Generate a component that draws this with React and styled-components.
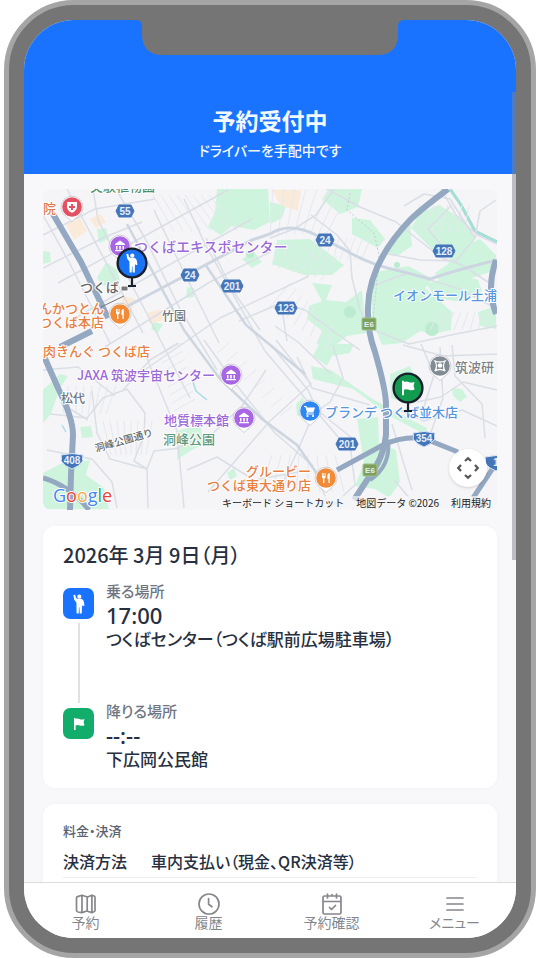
import React from "react";
import styled, { createGlobalStyle } from "styled-components";

const GlobalStyle = createGlobalStyle`
  * {
    box-sizing: border-box;
  }

  body {
    margin: 0;
    background: #fff;
    color: #27303f;
    font-family: "Noto Sans CJK JP", "Noto Sans", sans-serif;
    font-feature-settings: "palt";
  }

  h1, h2, h3, p, dl, dt, dd, ol {
    margin: 0;
    padding: 0;
  }

  button {
    font: inherit;
    color: inherit;
    border: 0;
    padding: 0;
    background: none;
    cursor: pointer;
  }
`;

const Page = styled.div`
  padding: 0 4px;
`;

const Phone = styled.div`
  height: 100vh;
  padding: 15px;
  border: 5px solid #a5a5a5;
  border-radius: 70px;
  background: #757575;
`;

const Screen = styled.div`
  position: relative;
  display: flex;
  flex-direction: column;
  height: 100%;
  overflow: hidden;
  border-radius: 50px;
  background: #f8f8fb;
`;

const Notch = styled.svg`
  position: absolute;
  top: 0;
  left: 50%;
  transform: translateX(-50%);
  fill: #757575;
`;

const Header = styled.header`
  display: flex;
  flex-direction: column;
  gap: 4px;
  padding: 84px 16px 14px;
  background: #1a73ff;
  color: #f1f8ff;
  text-align: center;
`;

const Title = styled.h1`
  font-size: 23px;
  line-height: 32px;
  font-weight: 700;
`;

const Subtitle = styled.p`
  font-size: 14px;
  line-height: 20px;
  font-weight: 500;
`;

const Content = styled.main`
  display: flex;
  flex: 1;
  flex-direction: column;
  gap: 16px;
  min-height: 0;
  padding: 15px 19px;
  overflow-y: auto;
  scrollbar-width: none;

  > * {
    flex-shrink: 0;
  }
`;

const ScrollThumb = styled.div`
  position: absolute;
  top: 72px;
  right: 0;
  width: 4px;
  height: 51%;
  background: rgba(128, 132, 140, 0.5);
`;

const MapCard = styled.section`
  position: relative;
  overflow: hidden;
  border-radius: 8px;
  background: #f5f5f8;
  font-feature-settings: normal;

  > svg {
    display: block;
    width: 100%;
  }
`;

const RecenterButton = styled.button`
  position: absolute;
  right: 10px;
  bottom: 23px;
  display: grid;
  place-items: center;
  width: 38px;
  height: 38px;
  border-radius: 50%;
  background: #fff;
  color: #555;
  box-shadow: 0 1px 3px rgba(0, 0, 0, 0.15);
`;

const Attribution = styled.div`
  position: absolute;
  right: 0;
  bottom: 0;
  display: flex;
  gap: 12px;
  padding: 0 6px;
  background: rgba(245, 245, 248, 0.7);
  color: #222;
  font-size: 10px;
  line-height: 14px;

  a {
    color: inherit;
    text-decoration: none;
  }
`;

const Card = styled.section`
  display: flex;
  flex-direction: column;
  gap: 12px;
  padding: 17px 20px;
  border-radius: 12px;
  background: #fff;
  box-shadow: 0 0 4px rgba(30, 40, 70, 0.03);
`;

const DateTitle = styled.h2`
  font-size: 20px;
  line-height: 24px;
  font-weight: 500;
`;

const StopList = styled.ol`
  list-style: none;
`;

const Stop = styled.li`
  display: flex;
  gap: 12px;

  &:not(:last-child) {
    min-height: 120px;
  }
`;

const StopMark = styled.div`
  display: flex;
  flex-direction: column;
  align-items: center;
  gap: 4px;
  padding-top: 9px;
`;

const StopIcon = styled.span`
  display: grid;
  place-items: center;
  width: 31px;
  height: 31px;
  border-radius: 7px;
  background: ${(props) => props.$color};
`;

const StopLine = styled.span`
  flex: 1;
  width: 2px;
  margin-bottom: -4px;
  background: #dfe1e5;
`;

const StopText = styled.div`
  line-height: 24px;
`;

const StopLabel = styled.p`
  color: #6f7681;
  font-size: 15px;
  font-weight: 500;
`;

const StopTime = styled.p`
  font-family: "Noto Sans", "Noto Sans CJK JP", sans-serif;
  font-size: 22px;
  font-weight: 500;
`;

const StopPlace = styled.p`
  font-size: 17px;
  font-weight: 500;
`;

const FeeCard = styled(Card)`
  gap: 8px;
  min-height: 200px;
`;

const FeeTitle = styled.h3`
  color: #5b626e;
  font-size: 13px;
  line-height: 20px;
  font-weight: 500;
`;

const FeeRow = styled.dl`
  display: grid;
  grid-template-columns: 76px 1fr;
  gap: 12px;
  padding-bottom: 4px;
  border-bottom: 1px solid #eeeff2;
  font-size: 16px;
  line-height: 24px;
  font-weight: 500;
`;

const Nav = styled.nav`
  display: grid;
  grid-template-columns: repeat(4, 1fr);
  padding: 10px 0 9px;
  border-top: 1px solid #dcdce0;
  background: #fff;
`;

const NavItem = styled.a`
  display: flex;
  flex-direction: column;
  align-items: center;
  color: #85878c;
  font-size: 14px;
  line-height: 14px;
  text-decoration: none;

  svg {
    fill: none;
    stroke: currentColor;
    stroke-width: 1.7;
    stroke-linecap: round;
    stroke-linejoin: round;
  }
`;

const navItems = [
  {
    label: "予約",
    icon: <path d="M1.5 5 Q1.5 4 2.5 3.6 L7 2.2 L12.5 4 L17 2.2 L19 3 Q20 3.4 20 4.4 V17.4 Q20 18.4 19 18.8 L16.8 19.6 L11.8 18 L7 19.6 L3 19 Q1.5 18.6 1.5 17.3 Z M7 2.2 V19.6 M12.2 4 V18 M16.9 2.2 V19.6" />,
  },
  {
    label: "履歴",
    icon: <path d="M11 1 A10 10 0 1 1 11 21 A10 10 0 1 1 11 1 M10.6 5.5 V11.3 L14 13.8" />,
  },
  {
    label: "予約確認",
    icon: <path d="M3.5 3 H18.5 Q20 3 20 4.5 V19.5 Q20 21 18.5 21 H3.5 Q2 21 2 19.5 V4.5 Q2 3 3.5 3 M2 8.5 H20 M6.5 1 V5 M11 1.5 V3 M15.5 1 V5 M8.5 14.5 L10.5 16.5 L14.5 12.5" />,
  },
  {
    label: "メニュー",
    icon: <path d="M3 5 H19 M3 11 H19 M3 17 H19" />,
  },
];

const Person = (props) => (
  <svg width="20" height="20" viewBox="0 0 20 20" fill="#fff" {...props}>
    <circle cx="10.3" cy="2.7" r="2.1" />
    <path d="M4.4 1 L6.2 .7 L7 4 L8.5 4.8 H12 Q14.4 5.2 14.9 7.7 L15.4 11.7 L13.7 12.2 L13 10.5 L12.8 19.6 H10.7 L10.4 13.2 H10 L9.7 19.6 H7.6 L7.4 8.4 L5.2 5.8 Z" />
  </svg>
);

const Flag = (props) => (
  <svg width="20" height="20" viewBox="0 0 20 20" fill="#fff" {...props}>
    <path d="M5 4 H6.6 V5 Q8.5 4 10.5 5 T15.5 5 L14.6 8.2 L15.5 11.3 Q13 12.3 10.8 11.4 T6.6 11.5 V16 H5 Z" />
  </svg>
);

const woods = [
  "M217 189 H268 L270 222 L254 230 L232 226 L221 235 L208 227 L215 212 Z",
  "M270 202 L286 206 L282 218 L270 224 Z",
  "M330 189 H362 L358 207 L340 214 L322 199 Z",
  "M352 218 L370 220 L385 239 L378 248 L352 234 Z",
  "M277 240 L310 239 L344 265 L332 275 L304 275 L272 264 Z",
  "M420 213 L439 205 L463 220 L475 238 L454 258 L432 249 L411 228 Z",
  "M393 238 L410 224 L412 246 L397 256 L386 252 Z",
  "M454 250 L480 239 L496 255 V270 L466 280 L440 282 L435 273 L448 264 Z",
  "M376 272 L408 266 L433 279 L425 288 L452 312 L451 330 L432 334 L420 331 L402 343 L382 345 L372 320 L372 290 Z",
  "M427 284 L457 274 L478 280 L482 291 L462 302 L435 298 Z",
  "M312 283 L332 285 L326 300 L346 302 L362 290 L366 333 L347 336 L333 347 L316 344 L322 331 L307 319 L309 306 L322 301 Z",
  "M319 344 L354 344 L350 353 L332 356 L327 366 L313 356 Z",
  "M311 366 L331 370 L371 398 L402 415 L427 428 L426 435 L390 416 L353 389 L313 379 Z",
  "M390 374 L410 366 L418 385 L410 405 L391 398 Z",
  "M357 419 L378 417 L379 443 L396 450 L400 482 L389 498 L375 489 L355 486 L364 463 Z",
  "M43 390 L60 374 L68 376 L59 390 L51 414 L43 423 Z",
  "M80 427 L91 426 L93 437 L82 438 Z",
  "M43 473 L60 464 L90 460 L86 475 L104 488 L109 509 H43 Z",
  "M177 431 L200 425 L205 444 L190 451 L177 460 Z",
  "M97 229 L106 228 L109 239 L99 243 Z",
  "M97 278 L106 262 L117 270 L120 281 L103 286 Z",
  "M242 259 L254 252 L262 262 L252 268 Z",
  "M452 388 L462 389 L467 397 L460 402 L453 396 Z",
  "M187 287 L194 288 L194 297 L186 298 Z",
  "M153 322 L163 324 L158 333 L151 329 Z",
  "M478 312 L496 306 V329 L480 326 Z",
  "M43 251 L50 252 L51 262 L43 264 Z",
  "M227 473 L234 468 L237 476 L230 480 Z",
  "M296 404 L303 397 L306 416 L297 416 Z",
];

const streets = [
  // northwest grid
  "M43 235 L95 209 L155 199 M43 268 L105 237 L142 222 M58 283 L150 233 L228 190 M75 318 L160 270 L252 219 M105 347 L210 282 L272 251 M130 380 L220 318 L309 276",
  "M93 189 L98 220 L146 312 L190 398 M116 189 L146 240 L180 309 L217 370 M154 210 L179 262 L219 343 M184 199 L206 246 L265 351 L344 444",
  "M43 215 L69 262 L110 343 M67 189 L110 270 L143 333 M206 238 L233 291 L260 330",
  // west and south
  "M43 370 L78 367 L115 396 M50 414 L87 418 L103 398 L127 389 L145 413 L144 435 L134 461 L147 469 L154 451 L180 448",
  "M92 391 L97 433 L110 459 L147 469 L148 508 M123 390 L150 360 L178 343 M60 384 L62 404 L88 420 M47 450 L92 459 L112 482 L117 508",
  "M146 356 L177 431 L184 508 M174 449 L211 435 L242 406 L266 370 M187 470 L217 457 L254 480 L310 470",
  "M204 340 L234 382 L275 433 L312 465 L330 508 M276 340 L311 384 L270 421 L208 492",
  "M275 326 L298 342 L331 374 M239 321 L281 303 L305 310 L337 334 L360 350 M281 303 L287 341",
  // northeast
  "M270 238 L294 229 L316 215 L327 199 L334 189 M311 215 L337 235 L350 251 L352 278 L360 310 L369 326",
  "M327 189 L360 207 L396 222 L420 241 L442 258 L462 265 L491 284 M383 253 L420 260 L456 261 L475 238 L450 199 L424 194 L404 206",
  "M441 189 L456 215 L477 235 L497 244 M496 200 L480 211 L475 238 M452 205 L428 229 L446 251",
  "M372 286 L408 273 L427 279 L460 289 L497 309 M374 330 L409 344 L456 334 L497 326",
  // east and southeast
  "M271 345 L308 390 L317 410 L352 438 M297 357 L312 388 L370 405 M333 345 L343 378 L330 402 L304 421",
  "M392 424 L403 461 L412 490 M403 345 L443 356 L497 354 M417 402 L441 397 L463 382 L497 390 M440 347 L443 398 L430 435",
  "M350 444 L355 485 L330 508 M283 482 L298 450 L315 410 M394 480 L418 508 M400 410 L424 421 L462 410 L497 426",
  "M452 345 L455 376 L482 404 L485 438 M421 344 L434 375 L424 407",
];

const lanes = [];
for (let i = 0; i < 8; i++) {
  lanes.push(`M${281 + i * 8} ${242 + i * 2} L${272 + i * 7} ${266 + i * 2}`);
  lanes.push(`M${273 + i * 11} 189 L${270 + i * 8} 235`);
  lanes.push(`M${420 + i * 7} 205 L${408 + i * 8} 232`);
  lanes.push(`M${153 + i * 8} 195 L${174 + i * 9} 231`);
  lanes.push(`M${160 + i * 2} ${355 + i * 8} L${181 + i * 2} ${343 + i * 8}`);
  lanes.push(`M${217 + i * 9} ${353 + i * 9} L${229 + i * 9} ${343 + i * 9}`);
  lanes.push(`M${270 + i * 8} ${307 + i * 6} L${290 + i * 6} ${283 + i * 6}`);
  lanes.push(`M${312 + i * 7} 260 L${315 + i * 8} 238`);
  lanes.push(`M${60 + i * 8} 386 L${64 + i * 6} 414`);
  lanes.push(`M${103 + i * 7} 421 L${111 + i * 5} 455`);
  lanes.push(`M${440 + i * 7} 312 L${430 + i * 8} 330`);
  lanes.push(`M${260 + i * 12} 492 L${272 + i * 9} 455`);
}

const shields = [
  [125, 211, "55"],
  [190, 275, "24"],
  [232, 286, "201"],
  [286, 308, "123"],
  [325, 240, "24"],
  [444, 251, "128"],
  [347, 444, "201"],
];

const MapText = styled.text`
  font-size: ${(props) => props.$size || 13}px;
  font-weight: 500;
  fill: ${(props) => props.$color};
  paint-order: stroke;
  stroke: #fff;
  stroke-width: 2px;
  stroke-linejoin: round;
  text-anchor: ${(props) => props.$anchor || "start"};
`;

const ShieldText = styled.text`
  fill: #e6effb;
  font-family: "Liberation Sans", sans-serif;
  font-size: ${(props) => props.$size || 10}px;
  font-weight: 700;
  text-anchor: middle;
`;

const GoogleText = styled.text`
  font-family: "Open Sans", "Noto Sans", sans-serif;
  font-size: 18px;
  font-weight: 500;
  paint-order: stroke;
  stroke: #fff;
  stroke-width: 2px;
`;

const museum = <path d="M-5 -2 L0 -5.5 L5 -2 V-1 H-5 Z M-4 0 H-2.5 V3.5 H-4 Z M-0.8 0 H0.8 V3.5 H-0.8 Z M2.5 0 H4 V3.5 H2.5 Z M-5 4 H5 V5.3 H-5 Z" />;
const food = <path d="M-4 -5 H-3.2 V-2 H-2.6 V-5 H-1.8 V-2 H-1.2 V-5 H-.4 V-1 Q-.5 .3 -1.6 .6 V5 H-2.9 V.6 Q-4 .2 -4 -1 Z M1.4 -3 Q2 -5 3.8 -5 V5 H2.5 V1 H1.4 Z" />;

function Poi({ x, y, color, children }) {
  return (
    <g transform={`translate(${x} ${y})`}>
      <path d="M0 14.5 Q-2 12.5 -6.5 9 A11 11 0 1 1 6.5 9 Q2 12.5 0 14.5 Z" fill="#fff" stroke="#c4c4ca" strokeWidth=".8" />
      <circle r="9.8" fill={color} />
      <g fill="#fff">{children}</g>
    </g>
  );
}

function Pin({ x, y, color, children }) {
  return (
    <g transform={`translate(${x} ${y})`}>
      <path d="M0 14 V23 M-4 23 H4" stroke="#17202c" strokeWidth="2.2" />
      <circle r="14.4" fill={color} stroke="#17202c" strokeWidth="2.4" />
      {children}
    </g>
  );
}

function RouteShield({ x, y, label }) {
  return (
    <g transform={`translate(${x} ${y})`}>
      <path d="M-11 -6 Q0 -9 11 -6 Q10 -2 11 0 Q8 5 0 8 Q-8 5 -11 0 Q-10 -2 -11 -6 Z" fill="#4475b9" stroke="#dce8f8" />
      <ShieldText y="3">{label}</ShieldText>
    </g>
  );
}

function AreaMap() {
  return (
    <svg viewBox="43 189 454 321" role="img" aria-label="つくば周辺の地図">
      <g fill="#cff4de">
        {woods.map((d) => <path key={d} d={d} />)}
      </g>
      <g fill="#bcebd0">
        <circle cx="350" cy="312" r="6" />
        <circle cx="432" cy="329" r="7" />
        <circle cx="397" cy="265" r="3" />
        <circle cx="250" cy="254" r="4" />
      </g>
      <g fill="#faead9">
        <path d="M66 224 L80 218 L87 231 L74 240 Z M90 219 L101 214 L106 222 L96 228 Z M272 190 H301 L298 211 L280 205 Z M148 313 L160 309 L164 320 L149 324 Z M122 296 L136 299 L132 309 L122 306 Z" />
      </g>
      <path d="M450 189 L461 205 L475 231 L497 242" fill="none" stroke="#9be0bd" strokeWidth="3" />
      <path d="M450 189 L461 205 L475 231 L497 242 M193 382 L196 391 L207 400 M62 425 L66 432" fill="none" stroke="#a8dde8" strokeWidth="1.5" />
      <g fill="none" stroke="#e6e8ee" strokeWidth="1">
        {lanes.map((d) => <path key={d} d={d} />)}
      </g>
      <g fill="none" stroke="#dadee5" strokeWidth="1.5" strokeLinejoin="round">
        {streets.map((d) => <path key={d} d={d} />)}
      </g>
      <path d="M350 193 L347 210 L374 233 L379 255 L376 290 L373 320" fill="none" stroke="#c3ccd5" strokeDasharray="2 2" />
      <g fill="none" stroke="#cdd6e0" strokeWidth="3">
        <path d="M105 318 L196 270 L252 240 L270 234 Q290 221 318 236 L345 250 Q370 265 400 271 L430 279 Q460 269 497 260" />
        <path d="M127 224 L184 330 L220 379 L262 419 L297 445 L318 475 M205 264 L246 325 L305 374" strokeWidth="2.5" />
      </g>
      <g fill="none" stroke="#94a8c2" strokeWidth="6">
        <path d="M53 214 L81 262 L108 318 M92 331 L60 347 M43 354 L58 388 Q73 418 73 435 L71 475 L70 510" />
        <path d="M43 478 Q70 486 89 510" strokeWidth="5" />
        <path d="M448 189 Q420 210 410 220 Q369 263 368 307 Q367 330 375 352 Q386 390 386 405 V435 Q384 458 367 480 L354 500" />
        <path d="M337 470 L383 445 Q401 436 423 438 L458 452 M497 462 L473 498" strokeWidth="5" />
        <path d="M388 440 Q391 466 370 480" strokeWidth="4" />
        <path d="M496 260 Q486 288 496 314" />
      </g>
      <path d="M101 307 L124 296" stroke="#777" fill="none" />

      <MapText x="90" y="191" $color="#4b8e70">実験植物園</MapText>
      <MapText x="43" y="213" $color="#e07a50">院</MapText>
      <MapText x="134" y="252" $color="#9b69d8" $size={14}>つくばエキスポセンター</MapText>
      <MapText x="80" y="292" $color="#666" $size={13}>つくば</MapText>
      <rect x="121" y="286" width="7" height="5" rx="1" fill="#777" stroke="#fff" />
      <MapText x="104" y="313" $color="#e8803f" $anchor="end">んかつとん</MapText>
      <MapText x="104" y="327" $color="#e8803f" $anchor="end">つくば本店</MapText>
      <MapText x="162" y="321" $color="#70757c" $size={12}>竹園</MapText>
      <MapText x="43" y="356" $color="#e8803f">肉きんぐ つくば店</MapText>
      <MapText x="215" y="380" $color="#9b69d8" $size={13} $anchor="end">JAXA 筑波宇宙センター</MapText>
      <MapText x="61" y="403" $color="#70757c" $size={12}>松代</MapText>
      <MapText x="229" y="425" $color="#9b69d8" $anchor="end">地質標本館</MapText>
      <MapText x="163" y="444" $color="#62997d">洞峰公園</MapText>
      <MapText transform="translate(96 452) rotate(-16)" $color="#666" $size={10}>洞峰公園通り</MapText>
      <MapText x="311" y="476" $color="#e8803f" $anchor="end">グルービー</MapText>
      <MapText x="311" y="490" $color="#e8803f" $anchor="end">つくば東大通り店</MapText>
      <MapText x="325" y="417" $color="#5795dd">ブランデ つくば並木店</MapText>
      <MapText x="393" y="300" $color="#5795dd">イオンモール土浦</MapText>
      <MapText x="455" y="372" $color="#7b8189">筑波研</MapText>

      {shields.map(([x, y, label]) => (
        <g key={`${x}-${y}`} transform={`translate(${x} ${y})`}>
          <path d={label.length > 2 ? "M-8 -6 H8 L11 0 L8 6 H-8 L-11 0 Z" : "M-6 -6 H6 L9 0 L6 6 H-6 L-9 0 Z"} fill="#4475b9" stroke="#4475b9" strokeLinejoin="round" />
          <ShieldText y="4">{label}</ShieldText>
        </g>
      ))}
      {[[369, 324], [370, 470]].map(([x, y]) => (
        <g key={y} transform={`translate(${x} ${y})`}>
          <rect x="-7" y="-6" width="14" height="12" rx="1" fill="#7ca15d" stroke="#a3bf8c" />
          <ShieldText y="3" $size={8}>E6</ShieldText>
        </g>
      ))}
      <RouteShield x={72} y={461} label="408" />
      <RouteShield x={424} y={439} label="354" />
      <RouteShield x={496} y={463} label="1" />

      <Poi x={72} y={207} color="#e25262">
        <path d="M-5 -5 H5 V1 Q4 4 0 6 Q-4 4 -5 1 Z" />
        <path d="M-3 0 H3 M0 -3 V3" stroke="#e25262" strokeWidth="2" />
      </Poi>
      <Poi x={120} y={246} color="#a866e5">{museum}</Poi>
      <Poi x={120} y={314} color="#f18b37">{food}</Poi>
      <Poi x={231} y={375} color="#a866e5">{museum}</Poi>
      <Poi x={244} y={418} color="#a866e5">{museum}</Poi>
      <Poi x={326} y={478} color="#f18b37">{food}</Poi>
      <Poi x={310} y={411} color="#2e86f0">
        <path d="M-6 -5 H-3.6 L-3 -3.5 H5 L3.4 1.5 H-2 L-2.4 2.5 H4 V3.5 H-4 L-3 1 L-4.6 -4 H-6 Z" />
        <circle cx="-2.5" cy="5" r="1.1" />
        <circle cx="3" cy="5" r="1.1" />
      </Poi>
      <Poi x={440} y={366} color="#828a94">
        <circle cy="-.5" r="2.3" />
        <path d="M-5 -5 Q0 -3 5 -5 Q2 0 5 5 Q0 2 -5 5 Q-2 0 -5 -5 Z" fill="none" stroke="#fff" strokeWidth="1.3" />
      </Poi>

      <Pin x={132} y={263} color="#1a73f5"><Person x="-10" y="-10" /></Pin>
      <Pin x={408} y={388} color="#119c50"><Flag x="-12" y="-12" width="24" height="24" /></Pin>

      <GoogleText x="53" y="502">
        <tspan fill="#4285f4">G</tspan>
        <tspan fill="#ea4335">o</tspan>
        <tspan fill="#fbab45">o</tspan>
        <tspan fill="#4285f4">g</tspan>
        <tspan fill="#34a853">l</tspan>
        <tspan fill="#ea4335">e</tspan>
      </GoogleText>
    </svg>
  );
}

function App() {
  return (
    <>
      <GlobalStyle />
      <Page>
        <Phone>
          <Screen>
            <Header>
              <Title>予約受付中</Title>
              <Subtitle>ドライバーを手配中です</Subtitle>
            </Header>
            <Content>
              <MapCard>
                <AreaMap />
                <RecenterButton type="button" aria-label="地図の中心を戻す">
                  <svg width="24" height="24" viewBox="0 0 24 24" fill="none" stroke="currentColor" strokeWidth="2.2">
                    <path d="M9 5 L12 2.2 L15 5 M9 19 L12 21.8 L15 19 M5 9 L2.2 12 L5 15 M19 9 L21.8 12 L19 15" />
                  </svg>
                </RecenterButton>
                <Attribution>
                  <button type="button">キーボード ショートカット</button>
                  <span>地図データ ©2026</span>
                  <a href="#terms">利用規約</a>
                </Attribution>
              </MapCard>
              <Card>
                <DateTitle>2026年 3月 9日（月）</DateTitle>
                <StopList>
                  <Stop>
                    <StopMark>
                      <StopIcon $color="#1a73ff"><Person /></StopIcon>
                      <StopLine />
                    </StopMark>
                    <StopText>
                      <StopLabel>乗る場所</StopLabel>
                      <StopTime>17:00</StopTime>
                      <StopPlace>つくばセンター（つくば駅前広場駐車場）</StopPlace>
                    </StopText>
                  </Stop>
                  <Stop>
                    <StopMark>
                      <StopIcon $color="#12ad6b"><Flag /></StopIcon>
                    </StopMark>
                    <StopText>
                      <StopLabel>降りる場所</StopLabel>
                      <StopTime>--:--</StopTime>
                      <StopPlace>下広岡公民館</StopPlace>
                    </StopText>
                  </Stop>
                </StopList>
              </Card>
              <FeeCard>
                <FeeTitle>料金・決済</FeeTitle>
                <FeeRow>
                  <dt>決済方法</dt>
                  <dd>車内支払い（現金、QR決済等）</dd>
                </FeeRow>
              </FeeCard>
            </Content>
            <Nav>
              {navItems.map((item) => (
                <NavItem key={item.label} href="#">
                  <svg width="22" height="22" viewBox="0 0 22 22">{item.icon}</svg>
                  {item.label}
                </NavItem>
              ))}
            </Nav>
            <ScrollThumb />
            <Notch width="268" height="35" viewBox="0 0 268 35">
              <path d="M0 0 H268 Q262 0 262 6 V14 Q262 35 241 35 H27 Q6 35 6 14 V6 Q6 0 0 0 Z" />
            </Notch>
          </Screen>
        </Phone>
      </Page>
    </>
  );
}

export default App;
